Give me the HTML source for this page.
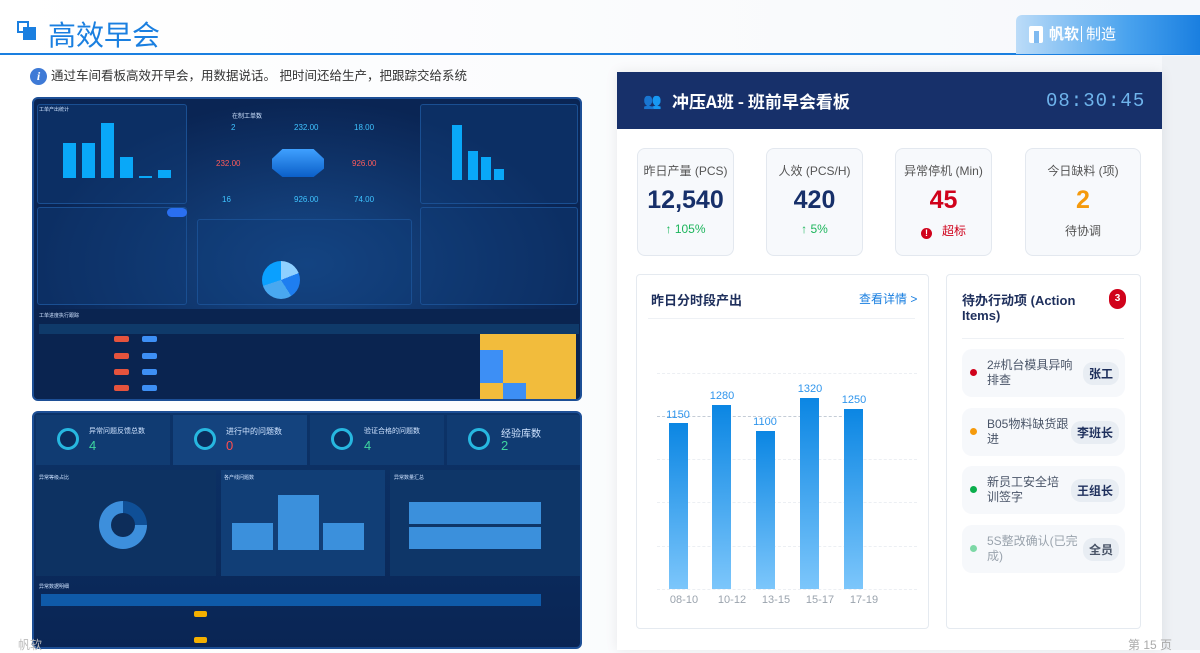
<!DOCTYPE html>
<html><head><meta charset="utf-8">
<style>
*{margin:0;padding:0;box-sizing:border-box}
body{width:1200px;height:650px;overflow:hidden;position:relative;background:linear-gradient(90deg,#fff,#f6f8fb);font-family:"Liberation Sans","Noto Sans CJK SC",sans-serif}
.a{position:absolute}
.dk{background:#0b2c5c;border:2px solid #1d4f96;border-radius:6px;overflow:hidden}
.pn{position:absolute;background:rgba(16,60,120,.45);border:1px solid #1a4f92;border-radius:3px}
.t{position:absolute;color:#cfe3ff;font-size:5px;white-space:nowrap}
.card{position:absolute;background:#f7f9fc;border:1px solid #e3e8ef;border-radius:8px;text-align:center}
.card .l{font-size:12px;color:#555;margin-top:13px}
.card .v{font-size:25px;font-weight:bold;margin-top:7px}
.card .s{font-size:12px;margin-top:7px}
.bar{position:absolute;width:19px;background:linear-gradient(#0b86e3,#7cc6fb)}
.bl{position:absolute;font-size:11px;color:#2f95ec;width:40px;text-align:center}
.xl{position:absolute;font-size:11px;color:#9aa3ad;width:40px;text-align:center;top:594px}
.g{position:absolute;left:657px;width:260px;border-top:1px dashed #eceff3}
.ai{position:absolute;left:962px;width:163px;height:48px;background:#f6f8fb;border-radius:10px}
.ai .d{position:absolute;left:8px;top:20px;width:7px;height:7px;border-radius:50%}
.ai .x{position:absolute;left:25px;top:9px;font-size:12px;line-height:15px;color:#4a5568;width:96px}
.ai .p{position:absolute;right:6px;top:13px;background:#e8edf3;border-radius:10px;font-size:12px;font-weight:bold;color:#1e2f5c;padding:3px 6px}
</style></head><body>
<div class="a" style="left:17px;top:21px;width:12px;height:12px;border:2px solid #1a7fe0;background:#fff"></div>
<div class="a" style="left:23px;top:27px;width:13px;height:13px;background:#1a7fe0"></div>
<div class="a" style="left:48px;top:15px;font-size:28px;color:#1a7fe0;font-family:'Noto Sans CJK SC',sans-serif;line-height:38px">高效早会</div>
<div class="a" style="left:0;top:53px;width:1200px;height:2px;background:#1a7fe0"></div>
<div class="a" style="left:1016px;top:15px;width:184px;height:39px;border-radius:6px 0 0 0;background:linear-gradient(90deg,#bcdcf8,#4aa3ee 60%,#1a7fe0)"></div>
<div class="a" style="left:1029px;top:26px;width:14px;height:17px;background:#fff;border-radius:2px"></div>
<div class="a" style="left:1034px;top:31px;width:5px;height:12px;background:#7fbaf0"></div>
<div class="a" style="left:1049px;top:23px;font-size:15px;color:#fff;font-weight:bold">帆软</div>
<div class="a" style="left:1081px;top:26px;width:1px;height:16px;background:#fff"></div>
<div class="a" style="left:1086px;top:23px;font-size:15px;color:#fff">制造</div>
<div class="a" style="left:30px;top:68px;width:17px;height:17px;border-radius:50%;background:#3e7ad6;color:#fff;font-size:12px;font-weight:bold;text-align:center;line-height:17px;font-family:'Liberation Serif',serif;font-style:italic">i</div>
<div class="a" style="left:51px;top:68px;font-size:12.5px;color:#333;line-height:17px">通过车间看板高效开早会，用数据说话。 把时间还给生产，把跟踪交给系统</div>

<div class="a dk" style="left:32px;top:97px;width:550px;height:304px;background:radial-gradient(ellipse at 50% 55%,#174a8a,#0a2554 70%)">
 <div class="pn" style="left:3px;top:5px;width:150px;height:100px"></div>
 <div class="pn" style="left:386px;top:5px;width:158px;height:100px"></div>
 <div class="pn" style="left:3px;top:108px;width:150px;height:98px"></div>
 <div class="pn" style="left:163px;top:120px;width:215px;height:86px"></div>
 <div class="pn" style="left:386px;top:108px;width:158px;height:98px"></div>
 <div class="t" style="left:5px;top:7px">工单产出统计</div>
 <div class="a" style="left:29px;top:44px;width:13px;height:35px;background:#09a8f8"></div>
 <div class="a" style="left:48px;top:44px;width:13px;height:35px;background:#09a8f8"></div>
 <div class="a" style="left:67px;top:24px;width:13px;height:55px;background:#09a8f8"></div>
 <div class="a" style="left:86px;top:58px;width:13px;height:21px;background:#09a8f8"></div>
 <div class="a" style="left:105px;top:77px;width:13px;height:2px;background:#09a8f8"></div>
 <div class="a" style="left:124px;top:71px;width:13px;height:8px;background:#09a8f8"></div>
 <div class="a" style="left:418px;top:26px;width:10px;height:55px;background:#09a8f8"></div>
 <div class="a" style="left:434px;top:52px;width:10px;height:29px;background:#09a8f8"></div>
 <div class="a" style="left:447px;top:58px;width:10px;height:23px;background:#09a8f8"></div>
 <div class="a" style="left:460px;top:70px;width:10px;height:11px;background:#09a8f8"></div>
 <div class="t" style="left:198px;top:12px;font-size:6px">在制工单数</div>
 <div class="t" style="left:197px;top:24px;font-size:8px;color:#3fc3ff">2</div>
 <div class="t" style="left:260px;top:24px;font-size:8px;color:#3fc3ff">232.00</div>
 <div class="t" style="left:320px;top:24px;font-size:8px;color:#3fc3ff">18.00</div>
 <div class="t" style="left:182px;top:60px;font-size:8px;color:#ff5b5b">232.00</div>
 <div class="t" style="left:318px;top:60px;font-size:8px;color:#ff5b5b">926.00</div>
 <div class="t" style="left:188px;top:96px;font-size:8px;color:#3fc3ff">16</div>
 <div class="t" style="left:260px;top:96px;font-size:8px;color:#3fc3ff">926.00</div>
 <div class="t" style="left:320px;top:96px;font-size:8px;color:#3fc3ff">74.00</div>
 <div class="a" style="left:238px;top:50px;width:52px;height:28px;background:linear-gradient(#3fa0ff,#0b5fc8);clip-path:polygon(20% 0,80% 0,100% 35%,100% 70%,80% 100%,20% 100%,0 70%,0 35%)"></div>
 <div class="a" style="left:228px;top:162px;width:38px;height:38px;border-radius:50%;background:conic-gradient(#8fd0ff 0 19%,#1e7ef0 19% 41%,#49a8f0 41% 70%,#0aa0ff 70%)"></div>
 <div class="a" style="left:133px;top:109px;width:20px;height:9px;border-radius:5px;background:#2a6ff0"></div>
 <div class="a" style="left:0;top:210px;width:550px;height:94px;background:#0a2450"></div>
 <div class="a" style="left:5px;top:225px;width:540px;height:10px;background:#0f3a6a"></div>
 <div class="t" style="left:5px;top:213px">工单进度执行跟踪</div>
 <div class="a" style="left:446px;top:235px;width:96px;height:66px;background:#f2bc3c"></div>
 <div class="a" style="left:446px;top:251px;width:23px;height:17px;background:#3d8ff5"></div>
 <div class="a" style="left:446px;top:268px;width:23px;height:16px;background:#3d8ff5"></div>
 <div class="a" style="left:469px;top:284px;width:23px;height:17px;background:#3d8ff5"></div>
 <div class="a" style="left:80px;top:237px;width:15px;height:6px;background:#e5533d;border-radius:2px"></div>
 <div class="a" style="left:80px;top:254px;width:15px;height:6px;background:#e5533d;border-radius:2px"></div>
 <div class="a" style="left:80px;top:270px;width:15px;height:6px;background:#e5533d;border-radius:2px"></div>
 <div class="a" style="left:80px;top:286px;width:15px;height:6px;background:#e5533d;border-radius:2px"></div>
 <div class="a" style="left:108px;top:237px;width:15px;height:6px;background:#3d8ff5;border-radius:2px"></div>
 <div class="a" style="left:108px;top:254px;width:15px;height:6px;background:#3d8ff5;border-radius:2px"></div>
 <div class="a" style="left:108px;top:270px;width:15px;height:6px;background:#3d8ff5;border-radius:2px"></div>
 <div class="a" style="left:108px;top:286px;width:15px;height:6px;background:#3d8ff5;border-radius:2px"></div>
</div>

<div class="a dk" style="left:32px;top:411px;width:550px;height:238px;background:linear-gradient(#0c3368,#0a2554)">
 <div class="a" style="left:2px;top:2px;width:134px;height:50px;background:#103b72"></div>
 <div class="a" style="left:139px;top:2px;width:134px;height:50px;background:#14437e"></div>
 <div class="a" style="left:276px;top:2px;width:134px;height:50px;background:#103b72"></div>
 <div class="a" style="left:413px;top:2px;width:134px;height:50px;background:#103b72"></div>
 <div class="a" style="left:23px;top:15px;width:22px;height:22px;border-radius:50%;border:3px solid #27b7e0;background:#0b2c5c"></div>
 <div class="a" style="left:160px;top:15px;width:22px;height:22px;border-radius:50%;border:3px solid #27b7e0;background:#0b2c5c"></div>
 <div class="a" style="left:297px;top:15px;width:22px;height:22px;border-radius:50%;border:3px solid #27b7e0;background:#0b2c5c"></div>
 <div class="a" style="left:434px;top:15px;width:22px;height:22px;border-radius:50%;border:3px solid #27b7e0;background:#0b2c5c"></div>
 <div class="t" style="left:55px;top:13px;font-size:7px">异常问题反馈总数</div>
 <div class="t" style="left:192px;top:13px;font-size:8px">进行中的问题数</div>
 <div class="t" style="left:330px;top:13px;font-size:7px">验证合格的问题数</div>
 <div class="t" style="left:467px;top:12px;font-size:10px">经验库数</div>
 <div class="t" style="left:55px;top:25px;font-size:13px;color:#3ed6a0">4</div>
 <div class="t" style="left:192px;top:25px;font-size:13px;color:#ff4d4d">0</div>
 <div class="t" style="left:330px;top:25px;font-size:13px;color:#3ed6a0">4</div>
 <div class="t" style="left:467px;top:25px;font-size:13px;color:#3ed6a0">2</div>
 <div class="a" style="left:2px;top:57px;width:180px;height:106px;background:#0d3262"></div>
 <div class="a" style="left:187px;top:57px;width:164px;height:106px;background:#113e76"></div>
 <div class="a" style="left:356px;top:57px;width:192px;height:106px;background:#0e3668"></div>
 <div class="t" style="left:5px;top:61px">异常等级占比</div>
 <div class="t" style="left:190px;top:61px">各产线问题数</div>
 <div class="t" style="left:360px;top:61px">异常数量汇总</div>
 <div class="a" style="left:65px;top:88px;width:48px;height:48px;border-radius:50%;background:conic-gradient(#0f4f96 0 25%,#3d8fdc 25%)"></div>
 <div class="a" style="left:77px;top:100px;width:24px;height:24px;border-radius:50%;background:#0d2d5a"></div>
 <div class="a" style="left:198px;top:110px;width:41px;height:27px;background:#3b90dc"></div>
 <div class="a" style="left:244px;top:82px;width:41px;height:55px;background:#3b90dc"></div>
 <div class="a" style="left:289px;top:110px;width:41px;height:27px;background:#3b90dc"></div>
 <div class="a" style="left:375px;top:89px;width:132px;height:22px;background:#3b90dc"></div>
 <div class="a" style="left:375px;top:114px;width:132px;height:22px;background:#3b90dc"></div>
 <div class="t" style="left:5px;top:170px">异常数据明细</div>
 <div class="a" style="left:7px;top:181px;width:500px;height:12px;background:#0f5aa8"></div>
 <div class="a" style="left:160px;top:198px;width:13px;height:6px;background:#f4b000;border-radius:2px"></div>
 <div class="a" style="left:160px;top:224px;width:13px;height:6px;background:#f4b000;border-radius:2px"></div>
</div>
<div class="a" style="left:18px;top:636px;font-size:12px;color:#bbb">帆软</div>

<div class="a" style="left:1162px;top:56px;width:38px;height:594px;background:#eef1f5"></div>
<div class="a" style="left:617px;top:72px;width:545px;height:578px;background:#fff;box-shadow:0 0 12px rgba(0,0,0,.08)"></div>
<div class="a" style="left:617px;top:72px;width:545px;height:57px;background:#17306a"></div>
<div class="a" style="left:643px;top:92px;font-size:15px;color:#fff">&#x1F465;</div>
<div class="a" style="left:672px;top:90px;font-size:17px;color:#fff;font-weight:bold;font-family:'Noto Sans CJK SC',sans-serif;line-height:22px">冲压A班 - 班前早会看板</div>
<div class="a" style="left:1046px;top:90px;font-size:19px;color:#6fb4ec;font-family:'Liberation Mono',monospace;letter-spacing:1px;line-height:22px">08:30:45</div>

<div class="card" style="left:637px;top:148px;width:97px;height:108px"><div class="l">昨日产量 (PCS)</div><div class="v" style="color:#17306a">12,540</div><div class="s" style="color:#1cb55b">↑ 105%</div></div>
<div class="card" style="left:766px;top:148px;width:97px;height:108px"><div class="l">人效 (PCS/H)</div><div class="v" style="color:#17306a">420</div><div class="s" style="color:#1cb55b">↑ 5%</div></div>
<div class="card" style="left:895px;top:148px;width:97px;height:108px"><div class="l">异常停机 (Min)</div><div class="v" style="color:#d0021b">45</div><div class="s" style="color:#d0021b"><span style="display:inline-block;width:11px;height:11px;border-radius:50%;background:#d0021b;color:#fff;font-size:9px;line-height:11px;font-weight:bold;vertical-align:-1px">!</span>&nbsp;&nbsp; 超标</div></div>
<div class="card" style="left:1025px;top:148px;width:116px;height:108px"><div class="l">今日缺料 (项)</div><div class="v" style="color:#f59a0c">2</div><div class="s" style="color:#555">待协调</div></div>

<div class="a" style="left:636px;top:274px;width:293px;height:355px;border:1px solid #e5eaf0;border-radius:4px"></div>
<div class="a" style="left:651px;top:290px;font-size:13px;font-weight:bold;color:#1e2f5c">昨日分时段产出</div>
<div class="a" style="left:859px;top:290px;font-size:12px;color:#1a7fe0">查看详情 &gt;</div>
<div class="a" style="left:648px;top:318px;width:267px;height:1px;background:#eef1f5"></div>
<div class="g" style="top:373px"></div><div class="g" style="top:459px"></div><div class="g" style="top:502px"></div><div class="g" style="top:546px"></div><div class="g" style="top:589px"></div>
<div class="a" style="left:657px;top:416px;width:200px;border-top:1px dashed #c4ccd6"></div>
<div class="bar" style="left:669px;top:423px;height:166px"></div>
<div class="bar" style="left:712px;top:405px;height:184px"></div>
<div class="bar" style="left:756px;top:431px;height:158px"></div>
<div class="bar" style="left:800px;top:398px;height:191px"></div>
<div class="bar" style="left:844px;top:409px;height:180px"></div>
<div class="bl" style="left:658px;top:409px">1150</div>
<div class="bl" style="left:702px;top:390px">1280</div>
<div class="bl" style="left:745px;top:416px">1100</div>
<div class="bl" style="left:790px;top:383px">1320</div>
<div class="bl" style="left:834px;top:394px">1250</div>
<div class="xl" style="left:664px">08-10</div><div class="xl" style="left:712px">10-12</div><div class="xl" style="left:756px">13-15</div><div class="xl" style="left:800px">15-17</div><div class="xl" style="left:844px">17-19</div>

<div class="a" style="left:946px;top:274px;width:195px;height:355px;border:1px solid #e5eaf0;border-radius:4px"></div>
<div class="a" style="left:962px;top:293px;font-size:13px;font-weight:bold;color:#1e2f5c;line-height:15px;width:120px">待办行动项 (Action Items)</div>
<div class="a" style="left:1109px;top:289px;width:17px;height:20px;border-radius:9px;background:#d0021b;color:#fff;font-size:10px;font-weight:bold;text-align:center;line-height:20px">3</div>
<div class="a" style="left:962px;top:338px;width:162px;height:1px;background:#eef1f5"></div>
<div class="ai" style="top:349px"><div class="d" style="background:#d0021b"></div><div class="x">2#机台模具异响排查</div><div class="p">张工</div></div>
<div class="ai" style="top:408px"><div class="d" style="background:#f59a0c"></div><div class="x" style="width:86px">B05物料缺货跟进</div><div class="p">李班长</div></div>
<div class="ai" style="top:466px"><div class="d" style="background:#0aae4c"></div><div class="x" style="width:80px">新员工安全培训签字</div><div class="p">王组长</div></div>
<div class="ai" style="top:525px"><div class="d" style="background:#7dd8a6"></div><div class="x" style="color:#9aa3ad">5S整改确认(已完成)</div><div class="p" style="color:#4a5568">全员</div></div>
<div class="a" style="left:1128px;top:636px;font-size:12px;color:#aaa">第 15 页</div>
</body></html>
